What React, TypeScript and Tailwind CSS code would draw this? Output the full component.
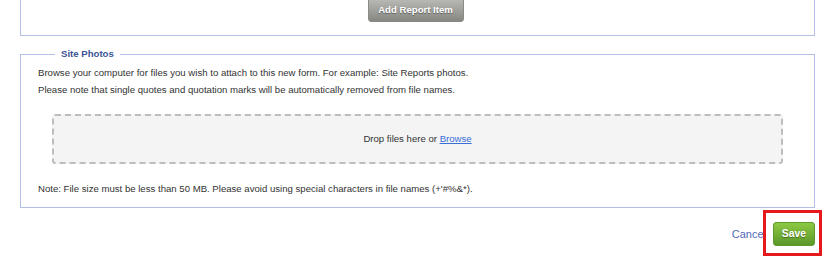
export default function App() {
  return (
    <div className="relative w-[823px] h-[257px] overflow-hidden bg-white text-[9.6px] text-[#333] font-['Liberation_Sans',Arial,sans-serif]">
      {/* report items fieldset, top cut off */}
      <div className="ml-[20px] mr-[8px] h-[36px] border-x border-b border-[#b4bfe4] flex justify-center">
        <button className="-mt-[3px] -ml-[4px] h-[25px] w-[96px] rounded-[3px] border border-[#8a8a86] bg-gradient-to-b from-[#bcbcb9] to-[#878782] font-bold text-white [text-shadow:0_1px_1px_rgba(0,0,0,0.4)] pt-[2px]">
          Add Report Item
        </button>
      </div>

      <fieldset className="mt-[11px] ml-[20px] mr-[8px] border border-[#b4bfe4] px-[17px] pb-[10px]">
        <legend className="ml-[17px] px-[6px] leading-[14px] font-bold text-[#3b5494]">Site Photos</legend>
        <div className="pt-[3px] leading-[17px]">
          <p>Browse your computer for files you wish to attach to this new form. For example: Site Reports photos.</p>
          <p>Please note that single quotes and quotation marks will be automatically removed from file names.</p>
        </div>
        <div className="mt-[16px] mx-[14px] h-[50px] rounded-[3px] border-2 border-dashed border-[#bdbdbd] bg-[#f4f4f4] flex items-center justify-center">
          <span>
            Drop files here or <a className="text-[#3a6fd6] underline">Browse</a>
          </span>
        </div>
        <p className="mt-[16px] leading-[17px]">
          Note: File size must be less than 50 MB. Please avoid using special characters in file names (+'#%&amp;*).
        </p>
      </fieldset>

      <div className="mt-[14px] mr-[8px] flex items-center justify-end gap-[7px]">
        <a className="text-[#5468b8] text-[11px]">Cancel</a>
        <button className="h-[24px] w-[42px] rounded-[3px] border border-[#5c9a2e] bg-gradient-to-b from-[#8ec943] to-[#5b962a] font-bold text-white text-[10.4px] [text-shadow:0_1px_1px_rgba(0,0,0,0.35)]">
          Save
        </button>
      </div>

      {/* annotation box */}
      <div className="absolute left-[763px] top-[210px] w-[59px] h-[46px] border-[3px] border-[#e3191b]" />
    </div>
  );
}
